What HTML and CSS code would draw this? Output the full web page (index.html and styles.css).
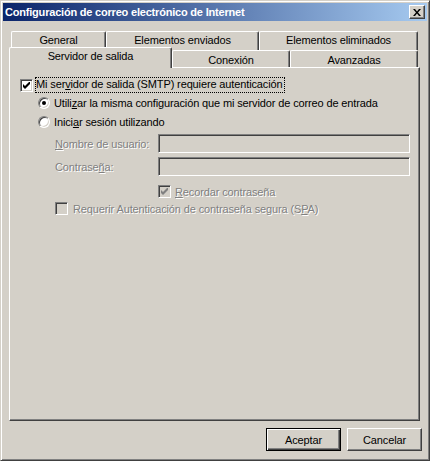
FILE: index.html
```html
<!DOCTYPE html>
<html lang="es">
<head>
<meta charset="utf-8">
<title>Configuración de correo electrónico de Internet</title>
<link rel="stylesheet" href="styles.css">
</head>
<body>
<div class="window">
  <div class="titlebar">
    <span class="title">Configuración de correo electrónico de Internet</span>
    <span class="close"><svg width="8" height="7" viewBox="0 0 8 7"><path d="M0 0h2l2 2.5L6 0h2L5 3.5 8 7H6L4 4.5 2 7H0l3-3.5z" fill="#000"/></svg></span>
  </div>
  <div class="tabs">
    <div class="tabrow back">
      <div class="tab w-general">General</div>
      <div class="tab w-enviados">Elementos enviados</div>
      <div class="tab w-eliminados">Elementos eliminados</div>
    </div>
    <div class="tabrow front">
      <div class="tab selected w-servidor">Servidor de salida</div>
      <div class="tab w-conexion">Conexión</div>
      <div class="tab w-avanzadas">Avanzadas</div>
    </div>
  </div>
  <div class="panel">
    <div class="row row-auth">
      <span class="check"><svg width="7" height="7" viewBox="0 0 7 7"><path d="M0 2v3l2 2 5-5V-1L2 4z" fill="#000"/></svg></span>
      <span class="focus">Mi ser<u>v</u>idor de salida (SMTP) requiere autenticación</span>
    </div>
    <div class="row row-radio1">
      <span class="radio on"><span class="dot"></span></span>
      <span class="lbl">Utili<u>z</u>ar la misma configuración que mi servidor de correo de entrada</span>
    </div>
    <div class="row row-radio2">
      <span class="radio"></span>
      <span class="lbl">Inici<u>a</u>r sesión utilizando</span>
    </div>
    <div class="row row-field first">
      <span class="flabel disabled"><u>N</u>ombre de usuario:</span>
      <span class="input"></span>
    </div>
    <div class="row row-field second">
      <span class="flabel disabled">Contrase<u>ñ</u>a:</span>
      <span class="input"></span>
    </div>
    <div class="row row-remember">
      <span class="check dis"><svg width="7" height="7" viewBox="0 0 7 7"><path d="M0 2v3l2 2 5-5V-1L2 4z" fill="#808080"/></svg></span>
      <span class="lbl disabled"><u>R</u>ecordar contraseña</span>
    </div>
    <div class="row row-spa">
      <span class="check dis"></span>
      <span class="lbl disabled">Requerir Autenticación de contraseña segura (S<u>P</u>A)</span>
    </div>
  </div>
  <div class="buttons">
    <button class="btn default">Aceptar</button>
    <button class="btn">Cancelar</button>
  </div>
</div>
</body>
</html>
```
FILE: styles.css
```css
html, body {
  margin: 0;
  padding: 0;
  background: #D4D0C8;
}
body {
  width: 430px;
  height: 461px;
  overflow: hidden;
  font-family: "Liberation Sans", Arial, sans-serif;
  font-size: 11px;
  letter-spacing: -0.13px;
  color: #000;
}
.window {
  box-sizing: border-box;
  width: 430px;
  height: 461px;
  background: #D4D0C8;
  border: 1px solid;
  border-color: #D4D0C8 #404040 #404040 #D4D0C8;
  box-shadow: inset 1px 1px #fff, inset -1px -1px #808080;
  padding: 2px;
  display: flex;
  flex-direction: column;
}
.titlebar {
  height: 18px;
  background: linear-gradient(to right, #0A246A, #A6CAF0);
  display: flex;
  align-items: center;
  justify-content: space-between;
  padding: 0 2px 0 2px;
  flex: none;
}
.title {
  color: #fff;
  font-weight: bold;
  font-size: 11px;
  letter-spacing: -0.2px;
  white-space: nowrap;
}
.close {
  box-sizing: border-box;
  width: 16px;
  height: 14px;
  background: #D4D0C8;
  border: 1px solid;
  border-color: #fff #404040 #404040 #fff;
  box-shadow: inset -1px -1px #808080;
  display: flex;
  align-items: center;
  justify-content: center;
}
.tabs {
  margin: 10px 0 0 6px;
  width: 411px;
  flex: none;
}
.tabrow {
  display: flex;
}
.tabrow.back {
  height: 19px;
  padding-left: 2px;
}
.tabrow.front {
  height: 17px;
}
.tab {
  box-sizing: border-box;
  background: #D4D0C8;
  border-left: 1px solid #fff;
  border-top: 1px solid #fff;
  border-right: 1px solid #404040;
  border-top-left-radius: 2px;
  border-top-right-radius: 2px;
  box-shadow: inset -1px 0 #808080;
  display: flex;
  justify-content: center;
  padding-top: 2px;
  white-space: nowrap;
  height: 19px;
}
.tabrow.front .tab {
  height: 17px;
}
.w-general { width: 95px; }
.w-enviados { width: 153px; }
.w-eliminados { width: 159px; }
.w-conexion { width: 118px; padding-top: 3px; }
.w-avanzadas { width: 128px; padding-top: 3px; }
.tab.selected {
  position: relative;
  z-index: 1;
  width: 163px;
  height: 21px !important;
  margin-top: -3px;
  padding-top: 2px;
}
.panel {
  box-sizing: border-box;
  margin-left: 6px;
  width: 411px;
  height: 354px;
  border: 1px solid;
  border-color: #fff #404040 #404040 #fff;
  box-shadow: inset -1px -1px #808080;
  display: flex;
  flex-direction: column;
  flex: none;
}
.row {
  display: flex;
  align-items: center;
  white-space: nowrap;
}
.row-auth {
  margin-top: 9px;
  height: 16px;
  padding-left: 10px;
}
.row-radio1 {
  height: 19px;
  padding-left: 28px;
}
.row-radio2 {
  height: 20px;
  padding-left: 28px;
}
.row-field {
  height: 19px;
  padding-left: 45px;
}
.row-field.first { margin-top: 2px; }
.row-field.second { margin-top: 4px; }
.row-remember {
  margin-top: 7px;
  height: 17px;
  padding-left: 148px;
}
.row-remember .lbl { margin-left: 4px; }
.row-spa {
  height: 17px;
  padding-left: 45px;
}
.row-spa .lbl { margin-left: 5px; }
.check {
  box-sizing: border-box;
  width: 13px;
  height: 13px;
  flex: none;
  background: #fff;
  border: 1px solid;
  border-color: #808080 #fff #fff #808080;
  box-shadow: inset 1px 1px #404040, inset -1px -1px #D4D0C8;
  display: flex;
  align-items: center;
  justify-content: center;
}
.check.dis {
  background: #D4D0C8;
}
.focus {
  margin-left: 2px;
  padding: 0 1px 0 0;
  border: 1px dotted #000;
  line-height: 13px;
  height: 14px;
}
.radio {
  box-sizing: border-box;
  width: 12px;
  height: 12px;
  flex: none;
  border-radius: 50%;
  background: #fff;
  border: 1px solid;
  border-color: #808080 #fff #fff #808080;
  box-shadow: inset 1px 1px #404040, inset -1px -1px #D4D0C8;
  display: flex;
  align-items: center;
  justify-content: center;
}
.radio .dot {
  width: 4px;
  height: 4px;
  border-radius: 50%;
  background: #000;
}
.row-radio1 .lbl, .row-radio2 .lbl {
  margin-left: 4px;
}
.flabel {
  width: 103px;
  flex: none;
}
.disabled {
  color: #808080;
  text-shadow: 1px 1px #fff;
}
.input {
  box-sizing: border-box;
  width: 252px;
  height: 19px;
  background: #D4D0C8;
  border: 1px solid;
  border-color: #808080 #fff #fff #808080;
  box-shadow: inset 1px 1px #404040, inset -1px -1px #D4D0C8;
}
.buttons {
  display: flex;
  justify-content: flex-end;
  gap: 6px;
  margin-top: 7px;
  padding-right: 5px;
}
.btn {
  box-sizing: border-box;
  width: 75px;
  height: 23px;
  margin: 0;
  padding: 0;
  font-family: "Liberation Sans", Arial, sans-serif;
  font-size: 11px;
  letter-spacing: -0.13px;
  color: #000;
  background: #D4D0C8;
  border: 1px solid;
  border-color: #fff #404040 #404040 #fff;
  box-shadow: inset -1px -1px #808080;
  border-radius: 0;
}
.btn.default {
  border: 1px solid #000;
  box-shadow: inset 1px 1px #fff, inset -1px -1px #404040, inset -2px -2px #808080;
}
```
